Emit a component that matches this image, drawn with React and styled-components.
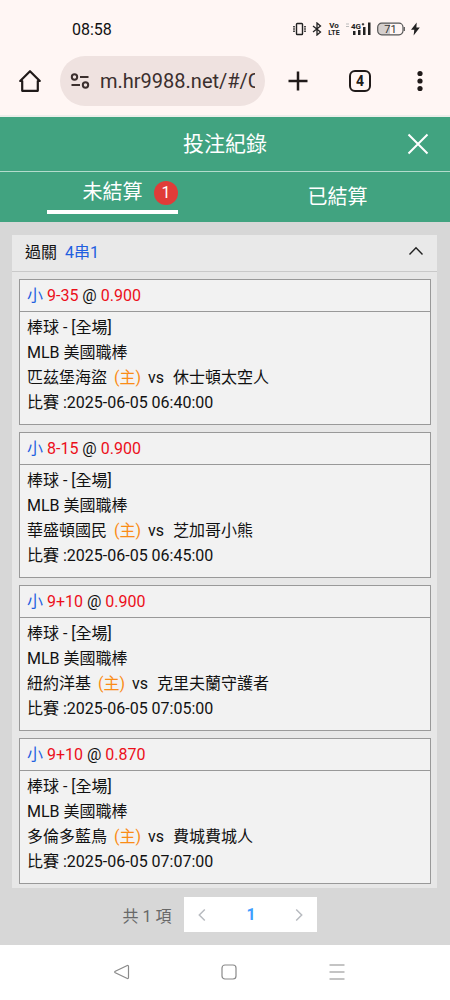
import React, { useState } from "react";
import styled, { createGlobalStyle } from "styled-components";

const GlobalStyle = createGlobalStyle`
  * {
    box-sizing: border-box;
  }
  body {
    margin: 0;
    background: #ffffff;
    color: #111111;
    font-family: Roboto, "Noto Sans CJK TC", sans-serif;
    font-size: 16px;
  }
  button, input {
    margin: 0;
    padding: 0;
    border: none;
    background: none;
    color: inherit;
    font: inherit;
  }
  button {
    cursor: pointer;
  }
  svg {
    display: block;
    flex: none;
  }
`;

const Wrapper = styled.div`
  display: flex;
  flex-direction: column;
  min-height: 100vh;
`;

/* browser */

const BrowserArea = styled.div`
  background: #fff6f4;
  border-bottom: 2px solid #eceeea;
`;

const StatusBar = styled.div`
  display: flex;
  align-items: center;
  justify-content: space-between;
  height: 56px;
  padding: 2px 30px 0px 72px;
`;

const StatusIcons = styled.div`
  display: flex;
  align-items: center;
  gap: 6px;
`;

const Toolbar = styled.div`
  display: grid;
  grid-template-columns: 60px minmax(0, 1fr) 65px 60px 60px;
  align-items: center;
  padding-bottom: 9px;
  color: #201a19;
`;

const ToolButton = styled.button`
  display: flex;
  align-items: center;
  justify-content: center;
  height: 50px;
`;

const AddressBar = styled.div`
  display: flex;
  align-items: center;
  gap: 10px;
  height: 50px;
  padding: 0px 10px;
  border-radius: 25px;
  background: #efe2e0;
`;

const AddressInput = styled.input`
  flex: 1;
  width: 100%;
  min-width: 0;
  font-size: 20px;
  color: #3b2f2e;
  outline: none;
`;

const TabCount = styled.span`
  display: flex;
  align-items: center;
  justify-content: center;
  width: 22px;
  height: 22px;
  border: 2px solid #201a19;
  border-radius: 6px;
  font-size: 14px;
  font-weight: 700;
`;

/* header */

const Header = styled.header`
  display: grid;
  grid-template-columns: 65px 1fr 65px;
  align-items: center;
  height: 55px;
  border-bottom: 1px solid #b3dccd;
  background: #41a380;
  color: #ffffff;
`;

const Title = styled.h1`
  grid-column: 2;
  margin: 0;
  font-size: 21px;
  font-weight: 400;
  line-height: 54px;
  text-align: center;
`;

const TabArea = styled.div`
  display: grid;
  grid-template-columns: 1fr 1fr;
  height: 50px;
  background: #41a380;
`;

const Tab = styled.button`
  display: flex;
  align-items: center;
  justify-content: center;
  padding-bottom: ${(props) => (props.$active ? "6px" : "0px")};
  color: #ffffff;
  font-size: 20px;
`;

const TabLabel = styled.span`
  position: relative;
  width: 131px;
  line-height: 36px;
  border-bottom: ${(props) => (props.$active ? "4px solid #ffffff" : "none")};
`;

const Badge = styled.span`
  position: absolute;
  top: 7px;
  right: 0;
  width: 24px;
  height: 24px;
  border-radius: 50%;
  background: #e03c38;
  font-size: 16px;
  line-height: 24px;
`;

/* list */

const Content = styled.main`
  display: flex;
  flex: 1;
  flex-direction: column;
  padding: 13px 13px 12px 12px;
  background: #d7d7d7;
`;

const Panel = styled.section`
  background: #e7e7e7;
`;

const PanelHeader = styled.button`
  display: flex;
  align-items: center;
  justify-content: space-between;
  width: 100%;
  height: 37px;
  padding: 0px 13px 4px 13px;
  border-bottom: 1px solid #c9c9c9;
  background: #e9e9e9;
`;

const BetList = styled.div`
  display: flex;
  flex-direction: column;
  gap: 7px;
  padding: 7px 6px 4px 7px;
`;

const BetCard = styled.article`
  border: 1px solid #999999;
  background: #f2f2f2;
`;

const BetTitle = styled.div`
  height: 32px;
  padding: 0px 7px;
  border-bottom: 1px solid #999999;
  line-height: 31px;
`;

const BetBody = styled.div`
  padding: 3px 7px 9px 7px;
  line-height: 25px;
`;

const Blue = styled.span`
  color: #1f5fe0;
`;

const Red = styled.span`
  color: #ec0f1a;
`;

const Home = styled.span`
  margin: 0px 7px;
  color: #fa8c16;
`;

const Away = styled.span`
  margin-left: 9px;
`;

const PageArea = styled.div`
  display: flex;
  align-items: center;
  justify-content: center;
  gap: 13px;
  margin-top: 9px;
  padding-right: 9px;
  color: #686868;
`;

const Pager = styled.nav`
  display: grid;
  grid-template-columns: 36px 61px 36px;
  height: 35px;
  background: #ffffff;
`;

const PageButton = styled.button`
  display: flex;
  align-items: center;
  justify-content: center;
  color: ${(props) => (props.$active ? "#409eff" : "#b8bbc0")};
  font-weight: ${(props) => (props.$active ? 700 : 400)};
`;

const SystemNav = styled.nav`
  display: flex;
  align-items: center;
  justify-content: center;
  gap: 84px;
  height: 55px;
  padding: 0px 0px 2px 8px;
  background: #ffffff;
`;

const betList = [
  { line: "9-35", odds: "0.900", home: "匹茲堡海盜", away: "休士頓太空人", time: "2025-06-05 06:40:00" },
  { line: "8-15", odds: "0.900", home: "華盛頓國民", away: "芝加哥小熊", time: "2025-06-05 06:45:00" },
  { line: "9+10", odds: "0.900", home: "紐約洋基", away: "克里夫蘭守護者", time: "2025-06-05 07:05:00" },
  { line: "9+10", odds: "0.870", home: "多倫多藍鳥", away: "費城費城人", time: "2025-06-05 07:07:00" },
];

const PhoneStatus = () => {
  return (
    <StatusBar>
      <span>08:58</span>
      <StatusIcons>
        <svg width="13" height="14" viewBox="0 0 13 14" fill="none" stroke="#222" strokeWidth="1.400">
          <rect x="3.500" y="1.500" width="6" height="11" rx="0.800" />
          <path d="M1 4v6M12 4v6" strokeWidth="1.600" strokeDasharray="1.500 0.750" />
        </svg>
        <svg width="10" height="14" viewBox="0 0 10 14" fill="none" stroke="#222" strokeWidth="1.300">
          <path d="M1 4l7.500 6L5 13V1l3.500 3L1 10" />
        </svg>
        <svg width="12" height="14" viewBox="0 0 12 14" fill="#222" fontFamily="Roboto" fontWeight="700" textAnchor="middle">
          <text x="6" y="6" fontSize="8">Vo</text>
          <text x="6" y="13" fontSize="7">LTE</text>
        </svg>
        <svg width="25" height="14" viewBox="0 0 25 14" fill="#222">
          <path d="M0 1.500h3v1H0zM0 4h3v1H0z" fill="#bbb" />
          <text x="5" y="7" fontFamily="Roboto" fontWeight="700" fontSize="8">4G</text>
          <path d="M15.800 1.800h2.400v1h-2.400zM16.500 1.100h1v2.400h-1z" />
          <path d="M7 9h2.500v4H7zM12 8h2.500v5H12zM17 5h2.500v8H17zM22 0.500h2.500V13H22z" />
        </svg>
        <svg width="28" height="14" viewBox="0 0 28 14" fill="none">
          <path d="M5 1.500h8v11H5a4 4 0 0 1-4-4v-3a4 4 0 0 1 4-4z" fill="#d5cfcd" />
          <rect x="0.700" y="1.200" width="25.300" height="11.600" rx="4" stroke="#555" strokeWidth="1.200" />
          <path d="M27.300 5v4" stroke="#555" strokeWidth="1.200" />
          <text x="13.500" y="11" fill="#333" fontFamily="Roboto" fontSize="11" textAnchor="middle">71</text>
        </svg>
        <svg width="9" height="14" viewBox="0 0 9 14" fill="#222">
          <path d="M5.700 0.500L0 7.800h3.300L2.600 13.500l6.200-7.900H5.400z" />
        </svg>
      </StatusIcons>
    </StatusBar>
  );
};

const BrowserBar = () => {
  const [address, setAddress] = useState("m.hr9988.net/#/C");

  return (
    <Toolbar>
      <ToolButton aria-label="首頁">
        <svg width="24" height="24" viewBox="0 0 24 24" fill="none" stroke="currentColor" strokeWidth="2.200" strokeLinejoin="round">
          <path d="M4.200 12v9.800h15.600V12h2L12 2.200 2.200 12z" />
        </svg>
      </ToolButton>
      <AddressBar>
        <svg width="20" height="18" viewBox="0 0 20 18" fill="none" stroke="#3b2f2e" strokeWidth="2">
          <circle cx="4.500" cy="5" r="2.700" />
          <path d="M10 5h8.500M1.500 13H10" />
          <circle cx="15.500" cy="13" r="2.700" />
        </svg>
        <AddressInput
          aria-label="網址"
          value={address}
          onChange={(e) => setAddress(e.target.value)}
        />
      </AddressBar>
      <ToolButton aria-label="新分頁">
        <svg width="20" height="20" viewBox="0 0 20 20" fill="none" stroke="currentColor" strokeWidth="2.500">
          <path d="M10 0.500v19M0.500 10h19" />
        </svg>
      </ToolButton>
      <ToolButton aria-label="分頁">
        <TabCount>4</TabCount>
      </ToolButton>
      <ToolButton aria-label="選單">
        <svg width="6" height="22" viewBox="0 0 6 22" fill="currentColor">
          <circle cx="3" cy="3.500" r="2.600" />
          <circle cx="3" cy="11" r="2.600" />
          <circle cx="3" cy="18.500" r="2.600" />
        </svg>
      </ToolButton>
    </Toolbar>
  );
};

const BetItem = ({ item }) => {
  return (
    <BetCard>
      <BetTitle>
        <Blue>小</Blue> <Red>{item.line}</Red> @ <Red>{item.odds}</Red>
      </BetTitle>
      <BetBody>
        <div>棒球 - [全場]</div>
        <div>MLB 美國職棒</div>
        <div>
          {item.home}
          <Home>(主)</Home>
          vs
          <Away>{item.away}</Away>
        </div>
        <div>比賽 :{item.time}</div>
      </BetBody>
    </BetCard>
  );
};

const App = () => {
  const [currentTab, setCurrentTab] = useState("open");
  const [isOpened, setIsOpened] = useState(true);

  return (
    <Wrapper>
      <GlobalStyle />
      <BrowserArea>
        <PhoneStatus />
        <BrowserBar />
      </BrowserArea>
      <Header>
        <Title>投注紀錄</Title>
        <ToolButton aria-label="關閉">
          <svg width="22" height="22" viewBox="0 0 22 22" fill="none" stroke="#fff" strokeWidth="2">
            <path d="M1.500 1.500l19 19M20.500 1.500l-19 19" />
          </svg>
        </ToolButton>
      </Header>
      <TabArea>
        <Tab $active={currentTab === "open"} onClick={() => setCurrentTab("open")}>
          <TabLabel $active={currentTab === "open"}>
            未結算
            <Badge>1</Badge>
          </TabLabel>
        </Tab>
        <Tab $active={currentTab === "closed"} onClick={() => setCurrentTab("closed")}>
          <TabLabel $active={currentTab === "closed"}>已結算</TabLabel>
        </Tab>
      </TabArea>
      <Content>
        <Panel>
          <PanelHeader aria-expanded={isOpened} onClick={() => setIsOpened(!isOpened)}>
            <span>
              過關&nbsp; <Blue>4串1</Blue>
            </span>
            <svg width="16" height="10" viewBox="0 0 16 10" fill="none" stroke="#222" strokeWidth="1.400">
              <path d="M1.500 8.500L8 1.800l6.500 6.700" />
            </svg>
          </PanelHeader>
          {isOpened && (
            <BetList>
              {betList.map((item, index) => {
                return <BetItem item={item} key={index} />;
              })}
            </BetList>
          )}
        </Panel>
        <PageArea>
          <span>共 1 項</span>
          <Pager>
            <PageButton aria-label="上一頁">
              <svg width="8" height="14" viewBox="0 0 8 14" fill="none" stroke="currentColor" strokeWidth="1.500">
                <path d="M6.800 1.500L1.300 7l5.500 5.500" />
              </svg>
            </PageButton>
            <PageButton $active>1</PageButton>
            <PageButton aria-label="下一頁">
              <svg width="8" height="14" viewBox="0 0 8 14" fill="none" stroke="currentColor" strokeWidth="1.500">
                <path d="M1.200 1.500L6.700 7l-5.500 5.500" />
              </svg>
            </PageButton>
          </Pager>
        </PageArea>
      </Content>
      <SystemNav>
        <ToolButton aria-label="返回">
          <svg width="24" height="18" viewBox="0 0 24 18" fill="none" stroke="#8a8a8a" strokeWidth="1.200">
            <path d="M18.300 2.500L6.300 8.200q-1.200.8 0 1.600l12 5.700q1.200.3 1.200-1V3.500q0-1.300-1.200-1z" />
          </svg>
        </ToolButton>
        <ToolButton aria-label="主畫面">
          <svg width="24" height="18" viewBox="0 0 24 18" fill="none" stroke="#8a8a8a" strokeWidth="1.200">
            <rect x="5" y="2" width="14" height="14" rx="3" />
          </svg>
        </ToolButton>
        <ToolButton aria-label="最近使用">
          <svg width="24" height="18" viewBox="0 0 24 18" fill="none" stroke="#8a8a8a" strokeWidth="1.200">
            <path d="M4.500 2h15M4.500 9h15M4.500 16h15" />
          </svg>
        </ToolButton>
      </SystemNav>
    </Wrapper>
  );
};

export default App;
